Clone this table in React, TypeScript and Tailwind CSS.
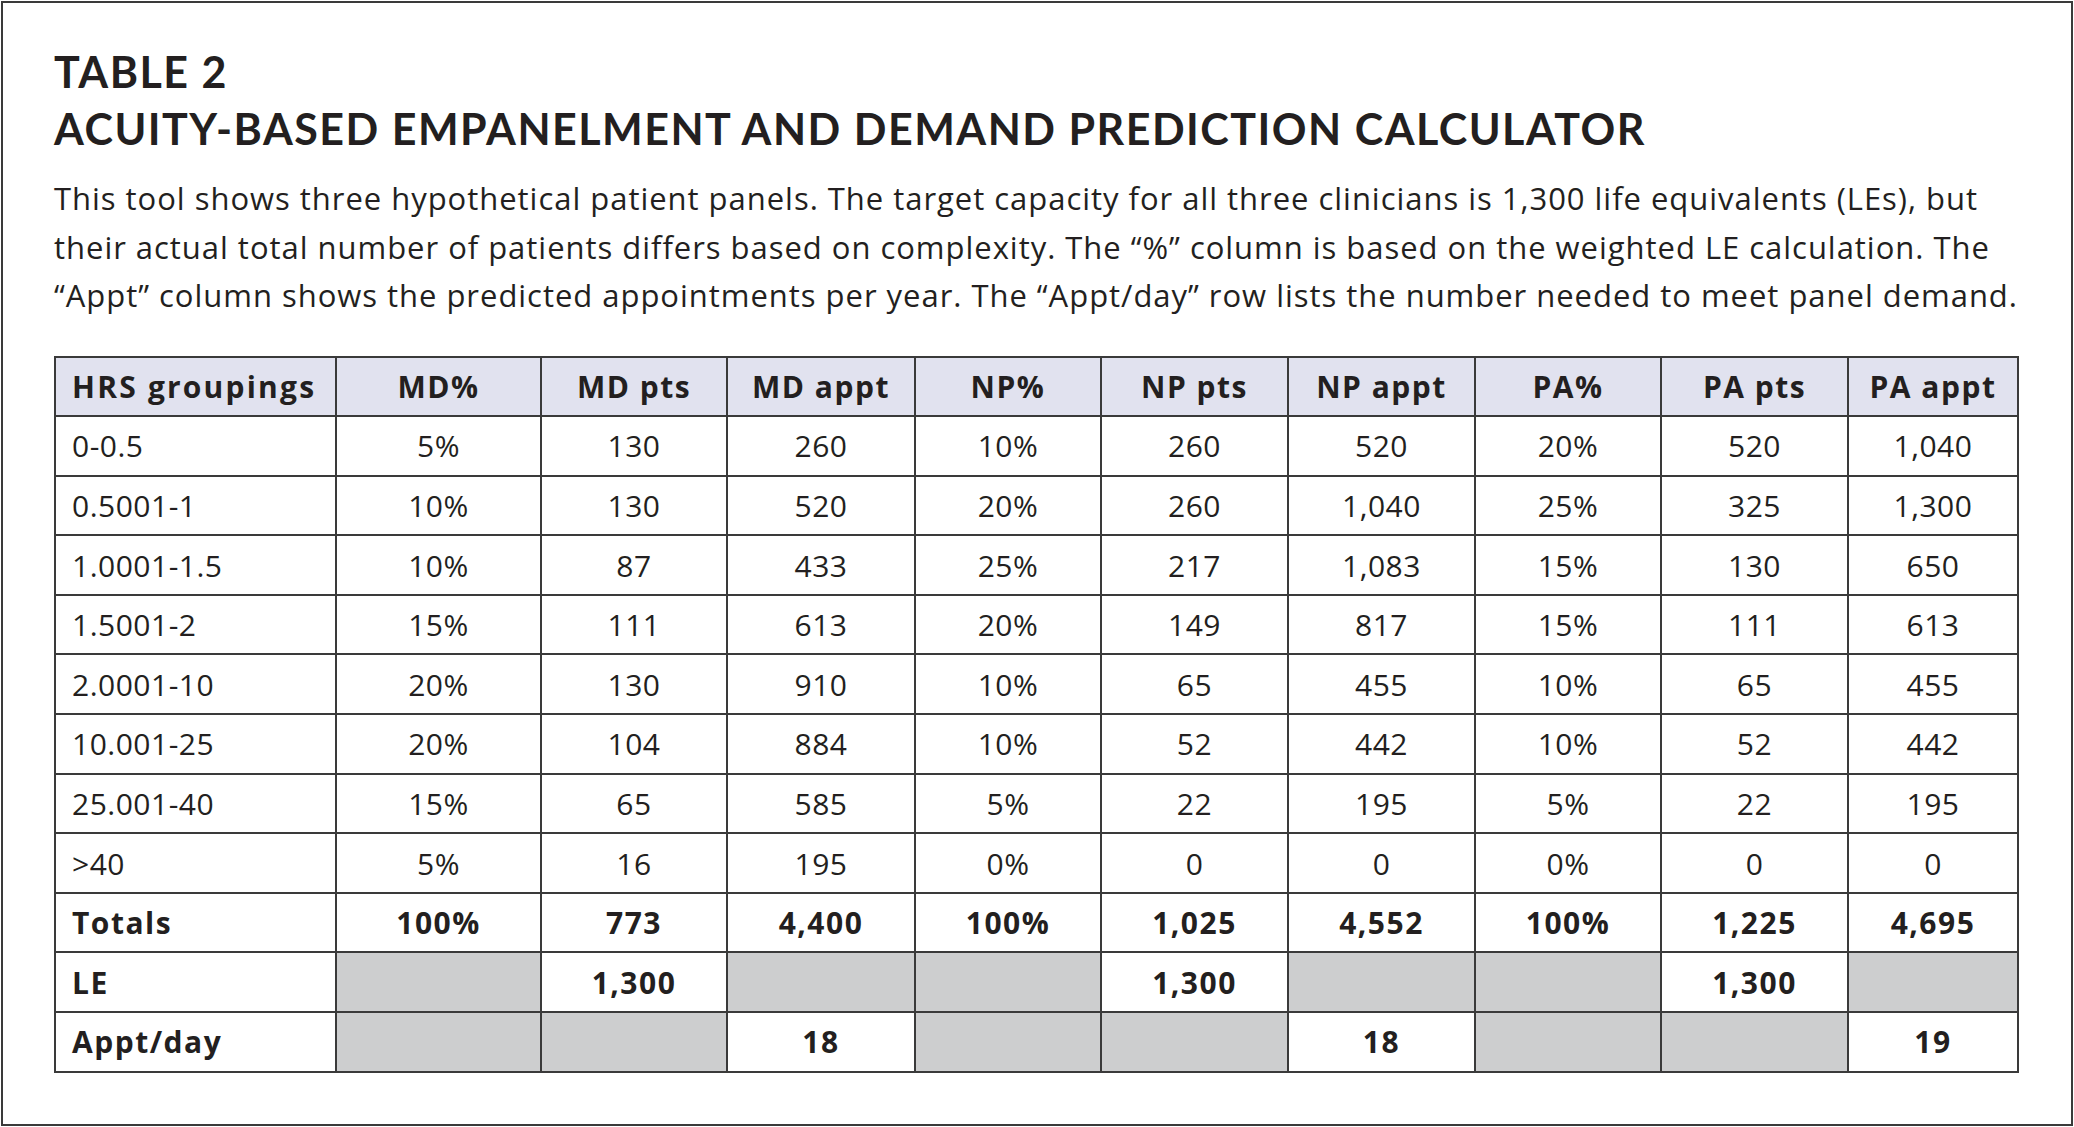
const headers = ["HRS groupings", "MD%", "MD pts", "MD appt", "NP%", "NP pts", "NP appt", "PA%", "PA pts", "PA appt"];

const colWidths = [281, 205, 186, 188, 186, 187, 187, 186, 187, 170];

const rows: string[][] = [
  ["0-0.5", "5%", "130", "260", "10%", "260", "520", "20%", "520", "1,040"],
  ["0.5001-1", "10%", "130", "520", "20%", "260", "1,040", "25%", "325", "1,300"],
  ["1.0001-1.5", "10%", "87", "433", "25%", "217", "1,083", "15%", "130", "650"],
  ["1.5001-2", "15%", "111", "613", "20%", "149", "817", "15%", "111", "613"],
  ["2.0001-10", "20%", "130", "910", "10%", "65", "455", "10%", "65", "455"],
  ["10.001-25", "20%", "104", "884", "10%", "52", "442", "10%", "52", "442"],
  ["25.001-40", "15%", "65", "585", "5%", "22", "195", "5%", "22", "195"],
  [">40", "5%", "16", "195", "0%", "0", "0", "0%", "0", "0"],
];

// null = grey filler cell
const boldRows: (string | null)[][] = [
  ["Totals", "100%", "773", "4,400", "100%", "1,025", "4,552", "100%", "1,225", "4,695"],
  ["LE", null, "1,300", null, null, "1,300", null, null, "1,300", null],
  ["Appt/day", null, null, "18", null, null, "18", null, null, "19"],
];

const cellBase = "border-2 border-[#3a3a3a] h-[59.6px] align-middle p-0";

export default function App() {
  return (
    <div className="w-[2074px] h-[1127px] bg-white p-[1px] font-['Open_Sans',sans-serif] text-[#231f20]">
      <div className="h-full border-2 border-[#3a3a3a] pl-[51px] pt-[40px]">
        <h1 className="font-['Lato',sans-serif] text-[43px] leading-[57px] tracking-[1.5px] font-bold uppercase">
          Table 2
          <br />
          Acuity-based empanelment and demand prediction calculator
        </h1>
        <p className="mt-[17px] text-[31px] leading-[48.5px] tracking-[0.97px] whitespace-nowrap">
          This tool shows three hypothetical patient panels. The target capacity for all three clinicians is 1,300 life equivalents (LEs), but
          <br />
          their actual total number of patients differs based on complexity. The “%” column is based on the weighted LE calculation. The
          <br />
          “Appt” column shows the predicted appointments per year. The “Appt/day” row lists the number needed to meet panel demand.
        </p>

        <table className="mt-[36px] table-fixed border-collapse w-[1963px] text-[30px] tracking-[0.5px]">
          <colgroup>
            {colWidths.map((w, i) => (
              <col key={i} style={{ width: w }} />
            ))}
          </colgroup>
          <thead>
            <tr className="bg-[#e1e2ef]">
              {headers.map((h, i) => (
                <th
                  key={h}
                  className={`${cellBase} font-bold ${i === 0 ? "text-left pl-[16px] tracking-[2.2px]" : "text-center tracking-[1.5px]"}`}
                >
                  {h}
                </th>
              ))}
            </tr>
          </thead>
          <tbody>
            {rows.map((row) => (
              <tr key={row[0]}>
                {row.map((v, i) => (
                  <td key={i} className={`${cellBase} ${i === 0 ? "text-left pl-[16px]" : "text-center"}`}>
                    {v}
                  </td>
                ))}
              </tr>
            ))}
            {boldRows.map((row) => (
              <tr key={row[0]} className="font-bold tracking-[1.5px]">
                {row.map((v, i) => (
                  <td
                    key={i}
                    className={`${cellBase} ${v === null ? "bg-[#cdcecf]" : ""} ${i === 0 ? "text-left pl-[16px]" : "text-center"}`}
                  >
                    {v}
                  </td>
                ))}
              </tr>
            ))}
          </tbody>
        </table>
      </div>
    </div>
  );
}
